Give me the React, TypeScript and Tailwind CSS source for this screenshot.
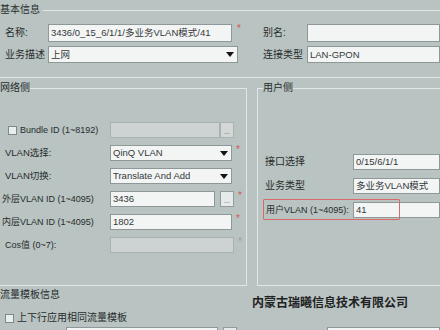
import React from "react";

const Arrow = () => (
  <svg width="8" height="5" viewBox="0 0 8 5" className="shrink-0">
    <path d="M0 0H8L4 5Z" fill="#151515" />
  </svg>
);

function TextBox({ className = "", text = "", disabled = false }: { className?: string; text?: string; disabled?: boolean }) {
  return (
    <div
      className={`border flex items-center px-[2px] overflow-hidden whitespace-nowrap text-[9.5px] ${
        disabled ? "bg-[#cdd3d2] border-[#a9b2b1]" : "bg-[#f3f5f5] border-[#8e9898]"
      } ${className}`}
    >
      <span className="text-[#333839]">{text}</span>
    </div>
  );
}

function Select({ className = "", text = "" }: { className?: string; text?: string }) {
  return (
    <div className={`border border-[#8e9898] bg-[#f3f5f5] flex items-center pl-[2px] pr-[3px] justify-between whitespace-nowrap text-[9.5px] ${className}`}>
      <span className="text-[#333839]">{text}</span>
      <Arrow />
    </div>
  );
}

function Dots({ disabled = false, empty = false }: { disabled?: boolean; empty?: boolean }) {
  return (
    <div
      className={`w-[14px] h-full border flex items-end justify-center text-[7px] leading-[8px] pb-[1px] text-[#555] ${
        disabled ? "bg-[#d3d8d7] border-[#aab2b1]" : "bg-[#e6eaea] border-[#939c9b]"
      }`}
    >
      {empty ? null : "..."}
    </div>
  );
}

function Star({ faint = false }: { faint?: boolean }) {
  return (
    <span className={`w-[10px] self-start pl-[4px] leading-[10px] ${faint ? "text-[#a0a0a0]" : "text-[#d25a5a]"}`}>*</span>
  );
}

function CheckBox() {
  return <div className="w-[9px] h-[9px] border border-[#7d8888] bg-[#e9eded] shrink-0" />;
}

export default function App() {
  return (
    <div className="w-[440px] h-[330px] overflow-hidden bg-[#b9c3c1] text-[10px] leading-[14px] text-[#272c2d] font-['Liberation_Sans','Noto_Sans_CJK_SC',sans-serif] flex flex-col">
      {/* 基本信息 */}
      <div className="h-[78px] shrink-0 border-b border-[#e1e7e6] flex flex-col">
        <div className="h-[20px] flex items-center">
          <span className="pr-[3px]">基本信息</span>
          <div className="flex-1 border-t border-[#e1e7e6]" />
        </div>
        <div className="mt-[4px] h-[18px] flex items-center">
          <span className="w-[48px] pl-[5px] shrink-0">名称:</span>
          <TextBox className="w-[184px] h-full shrink-0" text="3436/0_15_6/1/1/多业务VLAN模式/41" />
          <span className="w-[31px] shrink-0 self-start pl-[5px] leading-[10px] text-[#d25a5a]">*</span>
          <span className="w-[44px] shrink-0">别名:</span>
          <TextBox className="flex-1 h-full" />
        </div>
        <div className="mt-[4px] h-[17px] flex items-center">
          <span className="w-[48px] pl-[5px] shrink-0">业务描述</span>
          <Select className="w-[190px] h-full shrink-0" text="上网" />
          <span className="w-[25px] shrink-0" />
          <span className="w-[44px] shrink-0">连接类型</span>
          <TextBox className="flex-1 h-full" text="LAN-GPON" />
        </div>
      </div>

      {/* panels */}
      <div className="flex gap-[10px] shrink-0 mt-[3px]">
        <fieldset className="w-[247px] h-[205px] border-t border-r border-b border-[#e1e7e6] min-w-0">
          <legend className="leading-[14px]">网络侧</legend>
          <div className="pt-[27px] flex flex-col gap-[7px]">
            <div className="h-[16px] flex items-center">
              <div className="w-[110px] flex items-center pl-[8px] gap-[3px] shrink-0 text-[9px] whitespace-nowrap">
                <CheckBox />
                <span>Bundle ID (1~8192)</span>
              </div>
              <TextBox className="w-[110px] h-full" disabled />
              <Dots disabled />
            </div>
            <div className="h-[16px] flex items-center">
              <span className="w-[110px] pl-[5px] shrink-0 text-[9.5px]">VLAN选择:</span>
              <Select className="w-[122px] h-full" text="QinQ VLAN" />
              <Star />
            </div>
            <div className="h-[16px] flex items-center">
              <span className="w-[110px] pl-[5px] shrink-0 text-[9.5px]">VLAN切换:</span>
              <Select className="w-[122px] h-full" text="Translate And Add" />
            </div>
            <div className="h-[16px] flex items-center">
              <span className="w-[110px] pl-[2px] shrink-0 whitespace-nowrap text-[9px]">外层VLAN ID (1~4095)</span>
              <TextBox className="w-[105px] h-full" text="3436" />
              <span className="w-[5px]" />
              <Dots />
              <Star />
            </div>
            <div className="h-[16px] flex items-center">
              <span className="w-[110px] pl-[2px] shrink-0 whitespace-nowrap text-[9px]">内层VLAN ID (1~4095)</span>
              <TextBox className="w-[122px] h-full" text="1802" />
              <Star />
            </div>
            <div className="h-[16px] flex items-center">
              <span className="w-[110px] pl-[5px] shrink-0 text-[9px]">Cos值 (0~7):</span>
              <TextBox className="w-[124px] h-full" disabled />
              <Star faint />
            </div>
          </div>
        </fieldset>

        <fieldset className="flex-1 h-[205px] border-t border-l border-b border-[#e1e7e6] pl-[5px] min-w-0">
          <legend className="leading-[14px]">用户侧</legend>
          <div className="pt-[59px] flex flex-col gap-[8px]">
            <div className="h-[16px] flex items-center">
              <span className="w-[90px] pl-[2px] shrink-0">接口选择</span>
              <TextBox className="flex-1 h-full" text="0/15/6/1/1" />
            </div>
            <div className="h-[16px] flex items-center">
              <span className="w-[90px] pl-[2px] shrink-0">业务类型</span>
              <TextBox className="flex-1 h-full" text="多业务VLAN模式" />
            </div>
            <div className="h-[16px] flex items-center relative">
              <span className="w-[90px] pl-[3px] shrink-0 whitespace-nowrap text-[9px]">用户VLAN (1~4095):</span>
              <TextBox className="flex-1 h-full" text="41" />
              <div className="absolute left-0 top-[-3px] w-[137px] h-[21px] border-[1.5px] border-[#d86a6a] rounded-[1px]" />
            </div>
          </div>
        </fieldset>
      </div>

      {/* 流量模板信息 */}
      <div className="relative flex-1 flex flex-col">
        <div className="h-[14px] mt-[2px] flex items-center">
          <span>流量模板信息</span>
        </div>
        <div className="mt-[10px] h-[12px] flex items-center pl-[5px] gap-[3px]">
          <CheckBox />
          <span>上下行应用相同流量模板</span>
        </div>
        <div className="mt-[3px] h-[16px] flex items-center">
          <span className="w-[66px] shrink-0" />
          <TextBox className="w-[152px] h-full" />
          <span className="w-[5px]" />
          <Dots empty />
          <span className="w-[90px]" />
          <TextBox className="flex-1 h-full" />
        </div>
        <div className="absolute left-[252px] top-[9px] text-[12px] leading-[16px] font-bold text-[#1e2223]">
          内蒙古瑞曦信息技术有限公司
        </div>
      </div>
    </div>
  );
}
